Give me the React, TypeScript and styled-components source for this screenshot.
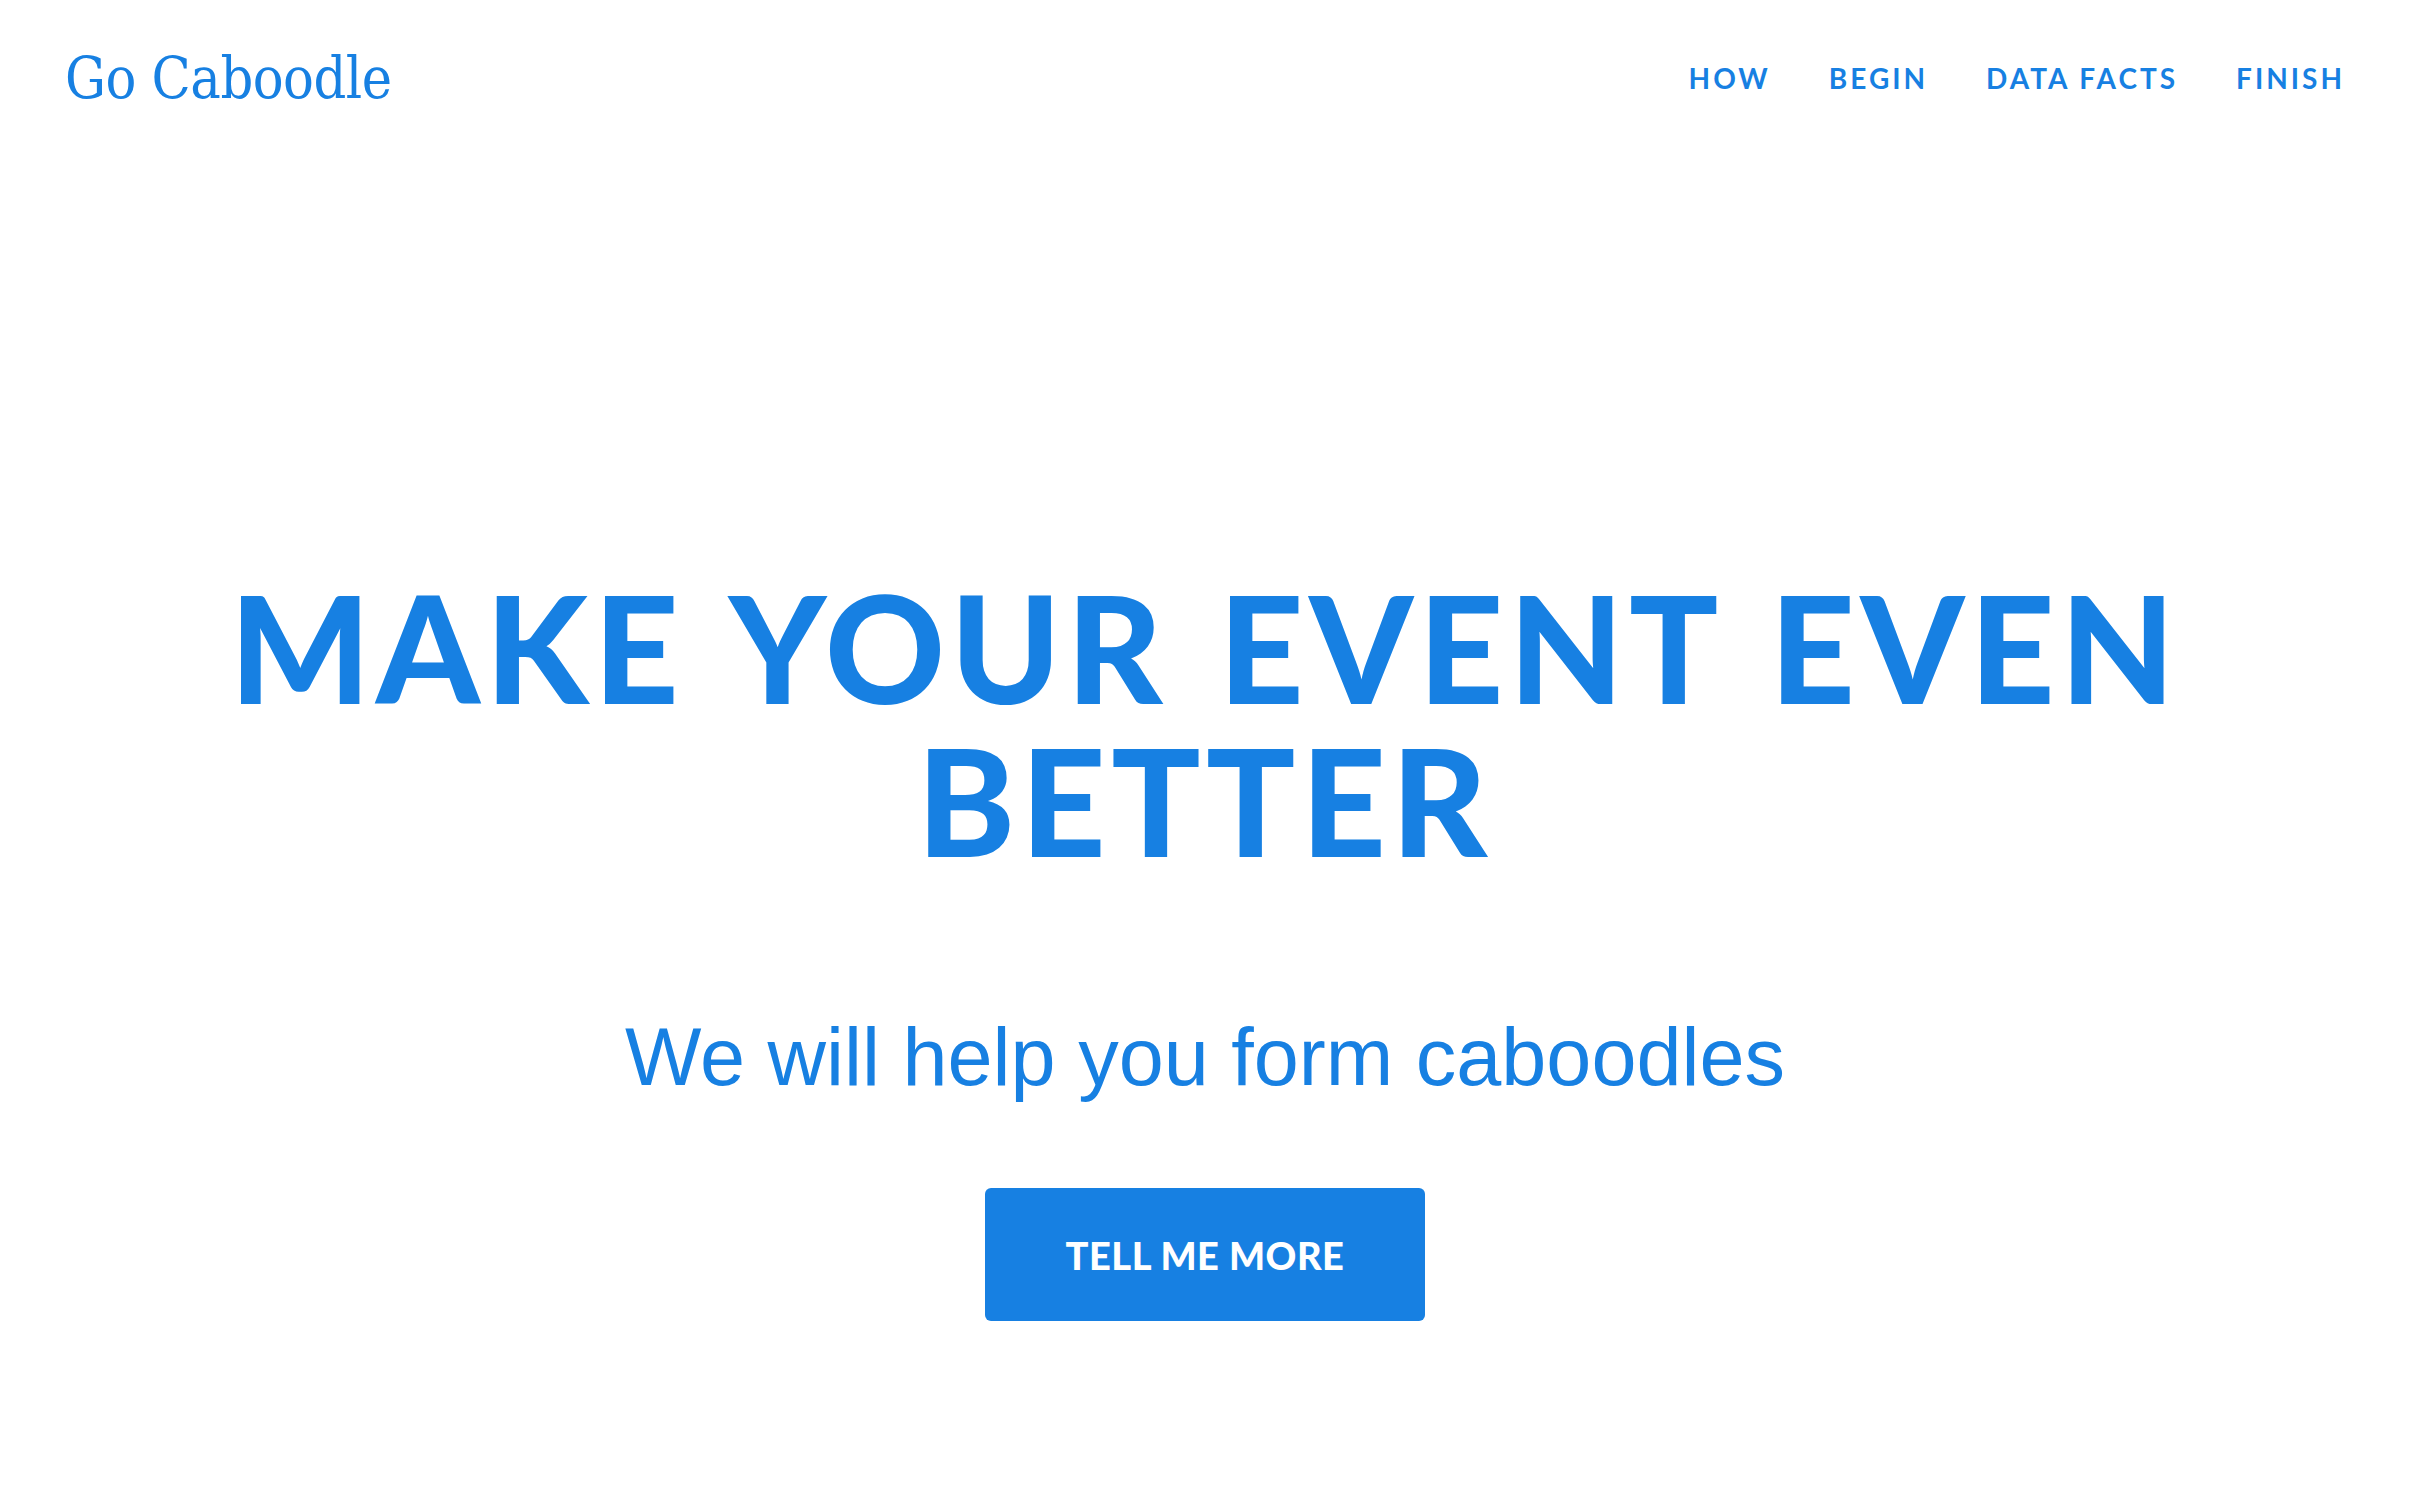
import React from "react";
import styled, { createGlobalStyle } from "styled-components";

const BLUE = "#1780e2";

const Global = createGlobalStyle`
  html, body { margin: 0; padding: 0; background: #ffffff; }
  body { font-family: "Lato", "Liberation Sans", sans-serif; }
  * { box-sizing: border-box; }
`;

const Page = styled.div`
  width: 100%;
  min-height: 1502px;
  background: #ffffff;
  display: flex;
  flex-direction: column;
`;

const Header = styled.header`
  height: 155px;
  padding: 0 81px 0 65px;
  display: flex;
  align-items: center;
  justify-content: space-between;
`;

const Logo = styled.a`
  font-family: "DejaVu Serif", "Liberation Serif", serif;
  font-stretch: condensed;
  font-size: 57px;
  color: ${BLUE};
  text-decoration: none;
  letter-spacing: -0.5px;
`;

const Nav = styled.nav`
  display: flex;
  gap: 58px;
`;

const NavLink = styled.a`
  font-family: "Lato", "Liberation Sans", sans-serif;
  font-weight: 700;
  font-size: 28px;
  letter-spacing: 3px;
  color: ${BLUE};
  text-decoration: none;
`;

const Hero = styled.section`
  display: flex;
  flex-direction: column;
  align-items: center;
  padding: 416px 16px 0 0;
  text-align: center;
`;

const Title = styled.h1`
  margin: 0;
  font-family: "Lato", "Liberation Sans", sans-serif;
  font-weight: 900;
  font-size: 148px;
  color: ${BLUE};
  letter-spacing: 5.5px;
  word-spacing: 10px;
`;

const TitleLine = styled.span`
  display: block;
  height: 153px;
  line-height: 153px;
`;

const Subtitle = styled.p`
  margin: 140px 0 0;
  font-family: "Liberation Sans", Arial, sans-serif;
  font-size: 81px;
  line-height: 1;
  color: ${BLUE};
`;

const Button = styled.button`
  margin-top: 90px;
  width: 440px;
  height: 133px;
  border: none;
  border-radius: 6px;
  background: ${BLUE};
  color: #ffffff;
  font-family: "Lato", "Liberation Sans", sans-serif;
  font-weight: 900;
  font-size: 38px;
  letter-spacing: 0.5px;
  cursor: pointer;
`;

export default function App() {
  return (
    <>
      <Global />
      <Page>
        <Header>
          <Logo href="#">Go Caboodle</Logo>
          <Nav>
            <NavLink href="#">HOW</NavLink>
            <NavLink href="#">BEGIN</NavLink>
            <NavLink href="#">DATA FACTS</NavLink>
            <NavLink href="#">FINISH</NavLink>
          </Nav>
        </Header>
        <Hero>
          <Title>
            <TitleLine>MAKE YOUR EVENT EVEN</TitleLine>
            <TitleLine>BETTER</TitleLine>
          </Title>
          <Subtitle>We will help you form caboodles</Subtitle>
          <Button>TELL ME MORE</Button>
        </Hero>
      </Page>
    </>
  );
}
